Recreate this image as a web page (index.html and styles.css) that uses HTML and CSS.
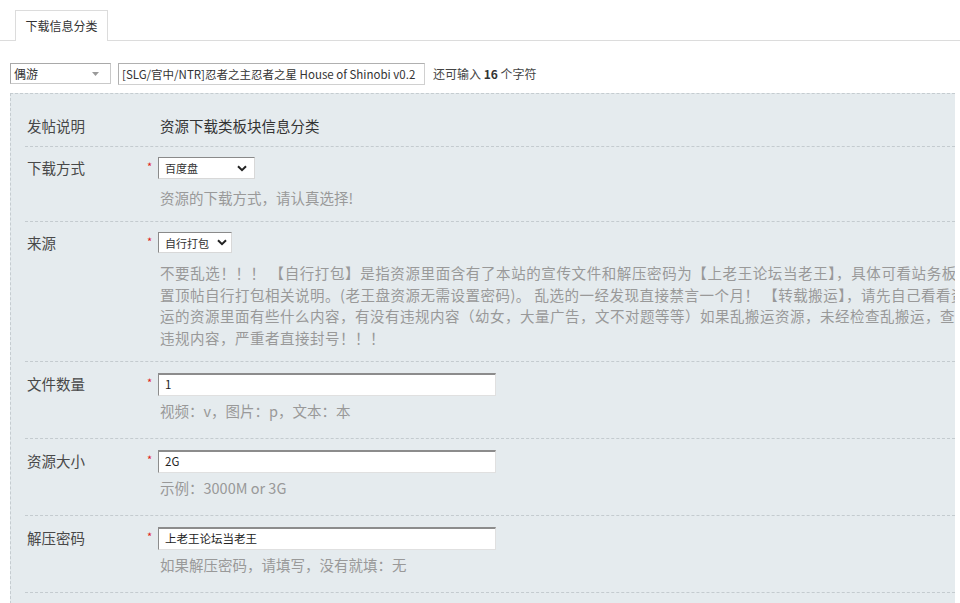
FILE: index.html
```html
<!DOCTYPE html>
<html lang="zh-CN">
<head>
<meta charset="utf-8">
<title>下载信息分类</title>
<link rel="stylesheet" href="styles.css">
</head>
<body>
<div class="tabs">
  <div class="tab">下载信息分类</div>
</div>

<div class="title-row">
  <div class="type-select">
    <span>偶游</span>
    <svg class="tri" width="7" height="4" viewBox="0 0 7 4"><path d="M0 0 H7 L3.5 4 Z" fill="#9a9a9a"/></svg>
  </div>
  <div class="title-input">[SLG/官中/NTR]忍者之主忍者之星 House of Shinobi v0.2</div>
  <div class="counter">还可输入 <b>16</b> 个字符</div>
</div>

<div class="panel">
  <div class="row row-intro">
    <div class="label">发帖说明</div>
    <div class="value">资源下载类板块信息分类</div>
  </div>

  <div class="row row-select">
    <div class="label">下载方式</div>
    <div class="star">*</div>
    <div class="body">
      <div class="select w97">
        <span>百度盘</span>
        <svg class="chev" width="10" height="7" viewBox="0 0 10 7"><path d="M1 1.2 L5 5.2 L9 1.2" fill="none" stroke="#222" stroke-width="2"/></svg>
      </div>
      <div class="hint hint-select">资源的下载方式，请认真选择!</div>
    </div>
  </div>

  <div class="row row-source">
    <div class="label">来源</div>
    <div class="star">*</div>
    <div class="body">
      <div class="select w74">
        <span>自行打包</span>
        <svg class="chev" width="10" height="7" viewBox="0 0 10 7"><path d="M1 1.2 L5 5.2 L9 1.2" fill="none" stroke="#222" stroke-width="2"/></svg>
      </div>
      <div class="desc">
        <span class="line l1">不要乱选！！！ 【自行打包】是指资源里面含有了本站的宣传文件和解压密码为【上老王论坛当老王】，具体可看站务板块</span>
        <span class="line">置顶帖自行打包相关说明。(老王盘资源无需设置密码)。 乱选的一经发现直接禁言一个月！ 【转载搬运】，请先自己看看资源</span>
        <span class="line">运的资源里面有些什么内容，有没有违规内容（幼女，大量广告，文不对题等等）如果乱搬运资源，未经检查乱搬运，查出</span>
        <span class="line">违规内容，严重者直接封号！！！</span>
      </div>
    </div>
  </div>

  <div class="row row-input">
    <div class="label">文件数量</div>
    <div class="star">*</div>
    <div class="body">
      <div class="input">1</div>
      <div class="hint">视频：v，图片：p，文本：本</div>
    </div>
  </div>

  <div class="row row-input">
    <div class="label">资源大小</div>
    <div class="star">*</div>
    <div class="body">
      <div class="input">2G</div>
      <div class="hint">示例：3000M or 3G</div>
    </div>
  </div>

  <div class="row row-input">
    <div class="label">解压密码</div>
    <div class="star">*</div>
    <div class="body">
      <div class="input">上老王论坛当老王</div>
      <div class="hint">如果解压密码，请填写，没有就填：无</div>
    </div>
  </div>
</div>
</body>
</html>
```

FILE: styles.css
```css
html, body {
  margin: 0;
  padding: 0;
  overflow: hidden;
  background: #fff;
}

body {
  width: 960px;
  height: 603px;
  font-family: "Noto Sans CJK SC", "Microsoft YaHei", sans-serif;
  color: #333;
}

.tabs {
  padding: 10px 0 0 15px;
  border-bottom: 1px solid #dcdcdc;
  height: 30px;
  display: flex;
}

.tab {
  width: 93px;
  height: 31px;
  border: 1px solid #dcdcdc;
  border-bottom: none;
  background: #fff;
  font-size: 12px;
  line-height: 30px;
  text-align: center;
  color: #333;
  box-sizing: border-box;
}

.title-row {
  display: flex;
  align-items: center;
  margin: 21px 0 0 10px;
  height: 23px;
}

.type-select {
  width: 101px;
  height: 21px;
  box-sizing: border-box;
  border: 1px solid #c9c9c9;
  border-top-color: #a9a9a9;
  border-left-color: #a9a9a9;
  display: flex;
  align-items: center;
  justify-content: space-between;
  padding: 0 11px 0 3px;
  font-size: 12px;
  color: #333;
}

.type-select .tri {
  display: block;
}

.title-input {
  margin-left: 7px;
  width: 307px;
  height: 22px;
  box-sizing: border-box;
  border: 1px solid #d0d0d0;
  border-top-color: #b0b0b0;
  border-left-color: #b0b0b0;
  font-size: 11.5px;
  line-height: 20px;
  padding-left: 3px;
  white-space: nowrap;
  overflow: hidden;
  color: #333;
  font-family: "Noto Sans CJK SC", "Open Sans", sans-serif;
}

.counter {
  margin-left: 8px;
  font-size: 12px;
  color: #444;
}

.counter b {
  color: #333;
}

.panel {
  margin: 8px 5px 0 10px;
  border-top: 1px dashed #c5ccd0;
  border-left: 1px dashed #c5ccd0;
  background: #e5ebee;
  padding-left: 14px;
  height: 520px;
  overflow: hidden;
}

.row {
  display: flex;
  border-bottom: 1px dashed #c4cbcf;
  font-size: 14.5px;
}

.label {
  width: 120px;
  padding-left: 2px;
  color: #484848;
  line-height: 22px;
  flex: none;
}

.star {
  width: 11px;
  flex: none;
  color: #e02020;
  font-size: 11px;
  line-height: 14px;
  padding-top: 2px;
}

.body {
  display: flex;
  flex-direction: column;
  align-items: flex-start;
}

.row-intro {
  padding: 22px 0 10px;
}

.row-intro .label,
.row-intro .value {
  line-height: 20px;
}

.row-intro .value {
  padding-left: 13px;
  color: #333;
}

.row-select {
  padding: 10px 0 12px;
}

.row-source {
  padding: 10px 0 13px;
}

.row-input {
  padding: 11px 0 16px;
}

.select {
  height: 22px;
  box-sizing: border-box;
  background: #fff;
  border: 1px solid #d8d8d8;
  border-top-color: #8a8a8a;
  border-left-color: #8a8a8a;
  display: flex;
  align-items: center;
  justify-content: space-between;
  padding: 0 7px 0 6px;
  font-size: 11px;
  color: #333;
}

.select .chev {
  display: block;
}

.w97 { width: 97px; }
.w74 { width: 74px; height: 21px; padding-right: 4px; }

.input {
  width: 338px;
  height: 23px;
  box-sizing: border-box;
  background: #fff;
  border: 1px solid #e0e0e0;
  border-top: 2px solid #8c8c8c;
  border-left-color: #8c8c8c;
  font-size: 11.5px;
  line-height: 19px;
  padding-left: 6px;
  color: #222;
}

.hint {
  margin: 4px 0 0 2px;
  line-height: 22px;
  color: #999;
  white-space: nowrap;
}

.hint-select {
  margin-top: 8px;
}

.desc {
  margin: 9px 0 0 2px;
  color: #999;
  line-height: 21.5px;
  letter-spacing: 0.5px;
}

.desc .line {
  display: block;
  white-space: nowrap;
}

.desc .l1 {
  letter-spacing: 0.6px;
}
```
